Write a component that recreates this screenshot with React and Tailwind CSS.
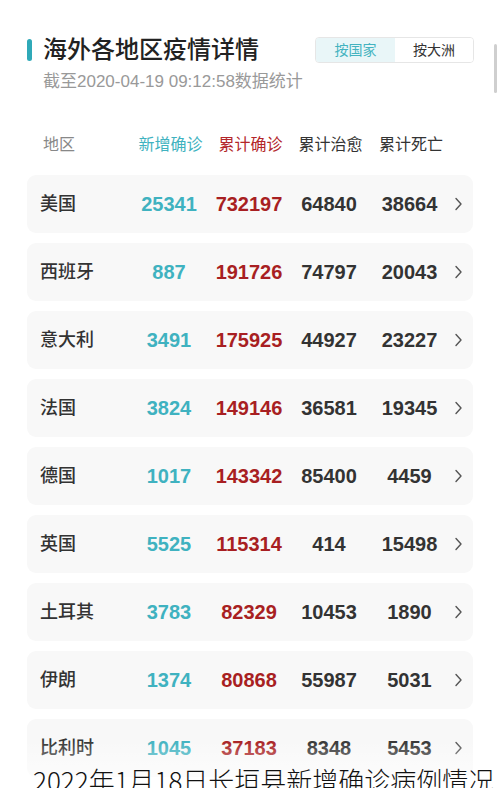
import React from 'react'

const rows = [
  ['美国', '25341', '732197', '64840', '38664'],
  ['西班牙', '887', '191726', '74797', '20043'],
  ['意大利', '3491', '175925', '44927', '23227'],
  ['法国', '3824', '149146', '36581', '19345'],
  ['德国', '1017', '143342', '85400', '4459'],
  ['英国', '5525', '115314', '414', '15498'],
  ['土耳其', '3783', '82329', '10453', '1890'],
  ['伊朗', '1374', '80868', '55987', '5031'],
  ['比利时', '1045', '37183', '8348', '5453'],
]

const cols = 'grid grid-cols-[89px_80px_80px_80px_81px_1fr] items-center'

function Chevron(){
  return (
    <svg width="9" height="14" viewBox="0 0 9 14" className="ml-[4px]">
      <polyline points="2,1.5 7,7 2,12.5" fill="none" stroke="#555" strokeWidth="1.4" strokeLinecap="round" strokeLinejoin="round" />
    </svg>
  )
}

export default function App(){
  return (
    <div className="relative h-[788px] w-[500px] overflow-hidden bg-white text-[#333]"
      style={{ fontFamily: '"Liberation Sans", "Noto Sans CJK SC", sans-serif' }}>
      <div className="absolute right-[3px] top-[44px] h-[49px] w-[3px] rounded-full bg-[#cfcfcf]" />

      <div className="flex items-start justify-between pl-[27px] pr-[26px] pt-[34px]">
        <div>
          <div className="flex items-center">
            <div className="h-[22px] w-[5px] rounded-full bg-[#2fa9b8]" />
            <h1 className="ml-[11px] text-[24px] font-medium leading-[32px] text-[#222]">海外各地区疫情详情</h1>
          </div>
          <div className="ml-[16px] mt-[4px] text-[17px] leading-[24px] text-[#999]">截至2020-04-19 09:12:58数据统计</div>
        </div>
        <div className="mt-[3px] flex h-[26px] overflow-hidden rounded-[4px] border border-[#e6e6e6] text-[14px]">
          <div className="flex w-[79px] items-center justify-center bg-[#e9f6f8] text-[#43b3c0]">按国家</div>
          <div className="flex w-[78px] items-center justify-center bg-white text-[#333]">按大洲</div>
        </div>
      </div>

      <div className={`${cols} mx-[27px] mt-[39px] pl-[16px] text-[16px] leading-[24px]`}>
        <div className="text-[#888]">地区</div>
        <div className="-ml-[3px] text-center text-[#3fb2c0]">新增确诊</div>
        <div className="-ml-[3px] text-center text-[#b3262a]">累计确诊</div>
        <div className="-ml-[3px] text-center text-[#333]">累计治愈</div>
        <div className="-ml-[3px] text-center text-[#333]">累计死亡</div>
        <div />
      </div>

      <div className="mx-[27px] mt-[18px] flex flex-col gap-[10px]">
        {rows.map(r => (
          <div key={r[0]} className={`${cols} h-[58px] rounded-[9px] bg-[#f8f8f8] pl-[13px]`}>
            <div className="text-[18px] font-medium text-[#333]">{r[0]}</div>
            <div className="text-center text-[20px] font-bold text-[#3fb2c0]">{r[1]}</div>
            <div className="text-center text-[20px] font-bold text-[#a81f22]">{r[2]}</div>
            <div className="text-center text-[20px] font-bold text-[#333]">{r[3]}</div>
            <div className="text-center text-[20px] font-bold text-[#333]">{r[4]}</div>
            <Chevron />
          </div>
        ))}
      </div>

      <div className="absolute inset-x-0 bottom-0 h-[48px] bg-gradient-to-b from-white/0 via-white/40 to-white/80" />
      <div className="absolute bottom-[-9px] left-[33px] whitespace-nowrap text-[26px] font-light leading-[34px] text-[#111]"
        style={{ fontFamily: '"Noto Sans CJK SC", sans-serif' }}>
        2022年1月18日长垣县新增确诊病例情况
      </div>
    </div>
  )
}
